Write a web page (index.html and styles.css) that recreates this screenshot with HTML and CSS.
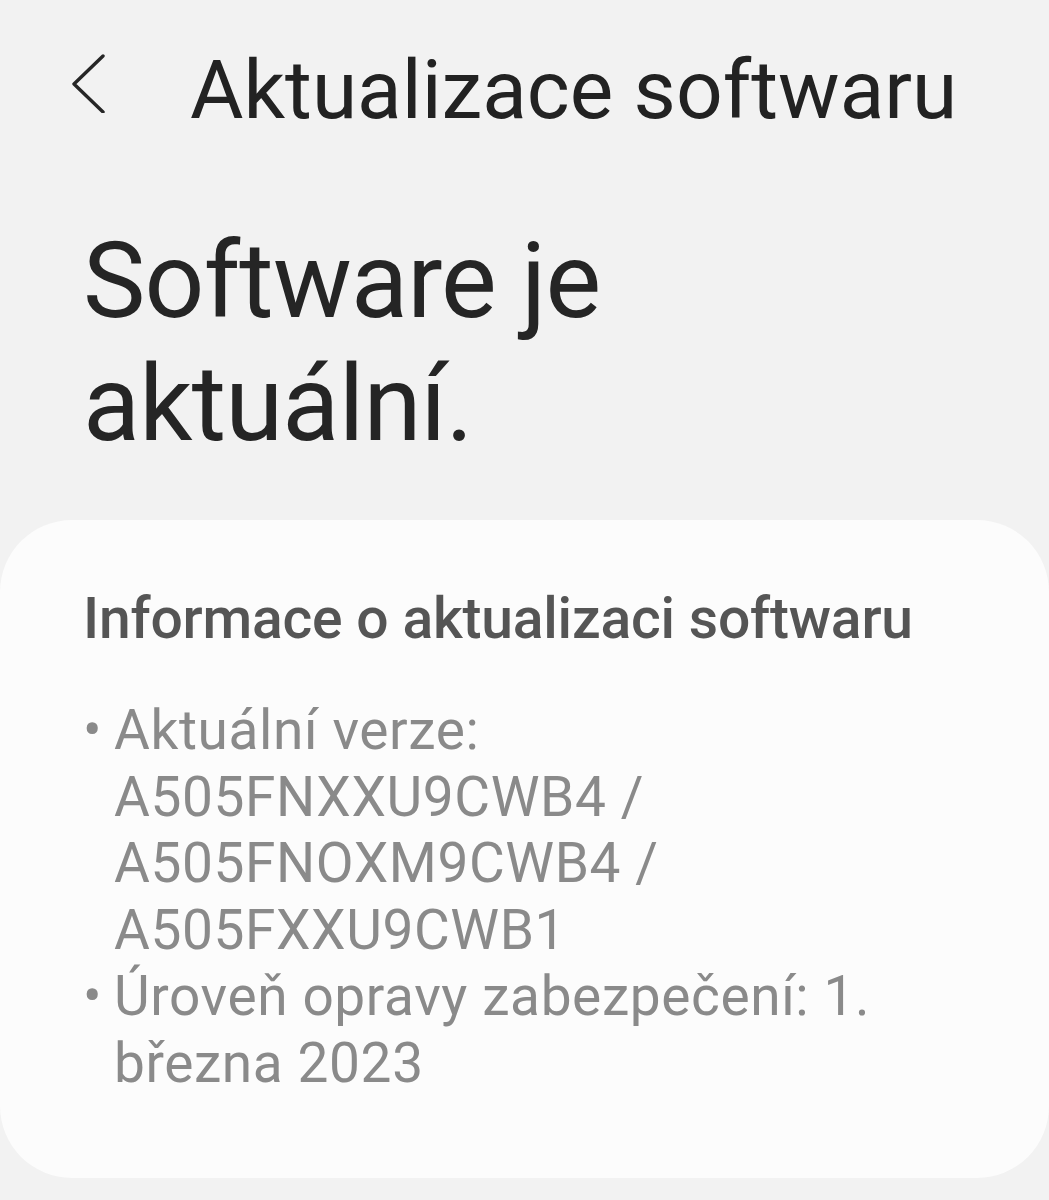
FILE: index.html
```html
<!DOCTYPE html>
<html lang="cs">
<head>
<meta charset="utf-8">
<link rel="stylesheet" href="styles.css">
</head>
<body>
<header class="topbar">
  <svg class="back" width="40" height="64" viewBox="0 0 40 64"><polyline points="31,7 2,35 31,63" fill="none" stroke="#262626" stroke-width="3.4" stroke-linecap="round" stroke-linejoin="round"/></svg>
  <h1 class="title">Aktualizace softwaru</h1>
</header>
<h2 class="status">Software je<br>aktuální.</h2>
<section class="card">
  <h3 class="card-title">Informace o aktualizaci softwaru</h3>
  <ul class="info">
    <li class="item"><span class="dot">•</span><span class="txt">Aktuální verze:<br>A505FNXXU9CWB4 /<br>A505FNOXM9CWB4 /<br>A505FXXU9CWB1</span></li>
    <li class="item"><span class="dot">•</span><span class="txt">Úroveň opravy zabezpečení: 1.<br>března 2023</span></li>
  </ul>
</section>
</body>
</html>
```
FILE: styles.css
```css
html, body {
  margin: 0;
  padding: 0;
}
body {
  background: #f2f2f2;
  font-family: Roboto, "Noto Sans", sans-serif;
  width: 1049px;
  height: 1200px;
  overflow: hidden;
}
.topbar {
  display: flex;
  align-items: flex-start;
  padding-top: 42px;
  height: 138px;
  box-sizing: border-box;
}
.back {
  margin-left: 72px;
  margin-top: 7px;
  flex: none;
}
.title {
  margin: 0 0 0 78px;
  font-size: 82px;
  line-height: 96px;
  font-weight: 400;
  color: #222;
  letter-spacing: 0;
  white-space: nowrap;
}
.status {
  margin: 82px 0 0 83px;
  font-size: 105px;
  line-height: 123px;
  font-weight: 400;
  color: #252525;
  letter-spacing: -0.8px;
}
.card {
  margin-top: 54px;
  background: #fcfcfc;
  border-radius: 72px;
  padding: 66px 83px 82px 83px;
}
.card-title {
  margin: 0;
  font-size: 57px;
  line-height: 66px;
  font-weight: 500;
  color: #555;
  letter-spacing: -0.2px;
  white-space: nowrap;
}
.info {
  list-style: none;
  margin: 45px 0 0 0;
  padding: 0;
  font-size: 55px;
  line-height: 66.5px;
  color: #8a8a8a;
  letter-spacing: 0.6px;
}
.item {
  display: flex;
}
.dot {
  width: 31px;
  flex: none;
  letter-spacing: 0;
}
.txt {
  white-space: nowrap;
}
```
